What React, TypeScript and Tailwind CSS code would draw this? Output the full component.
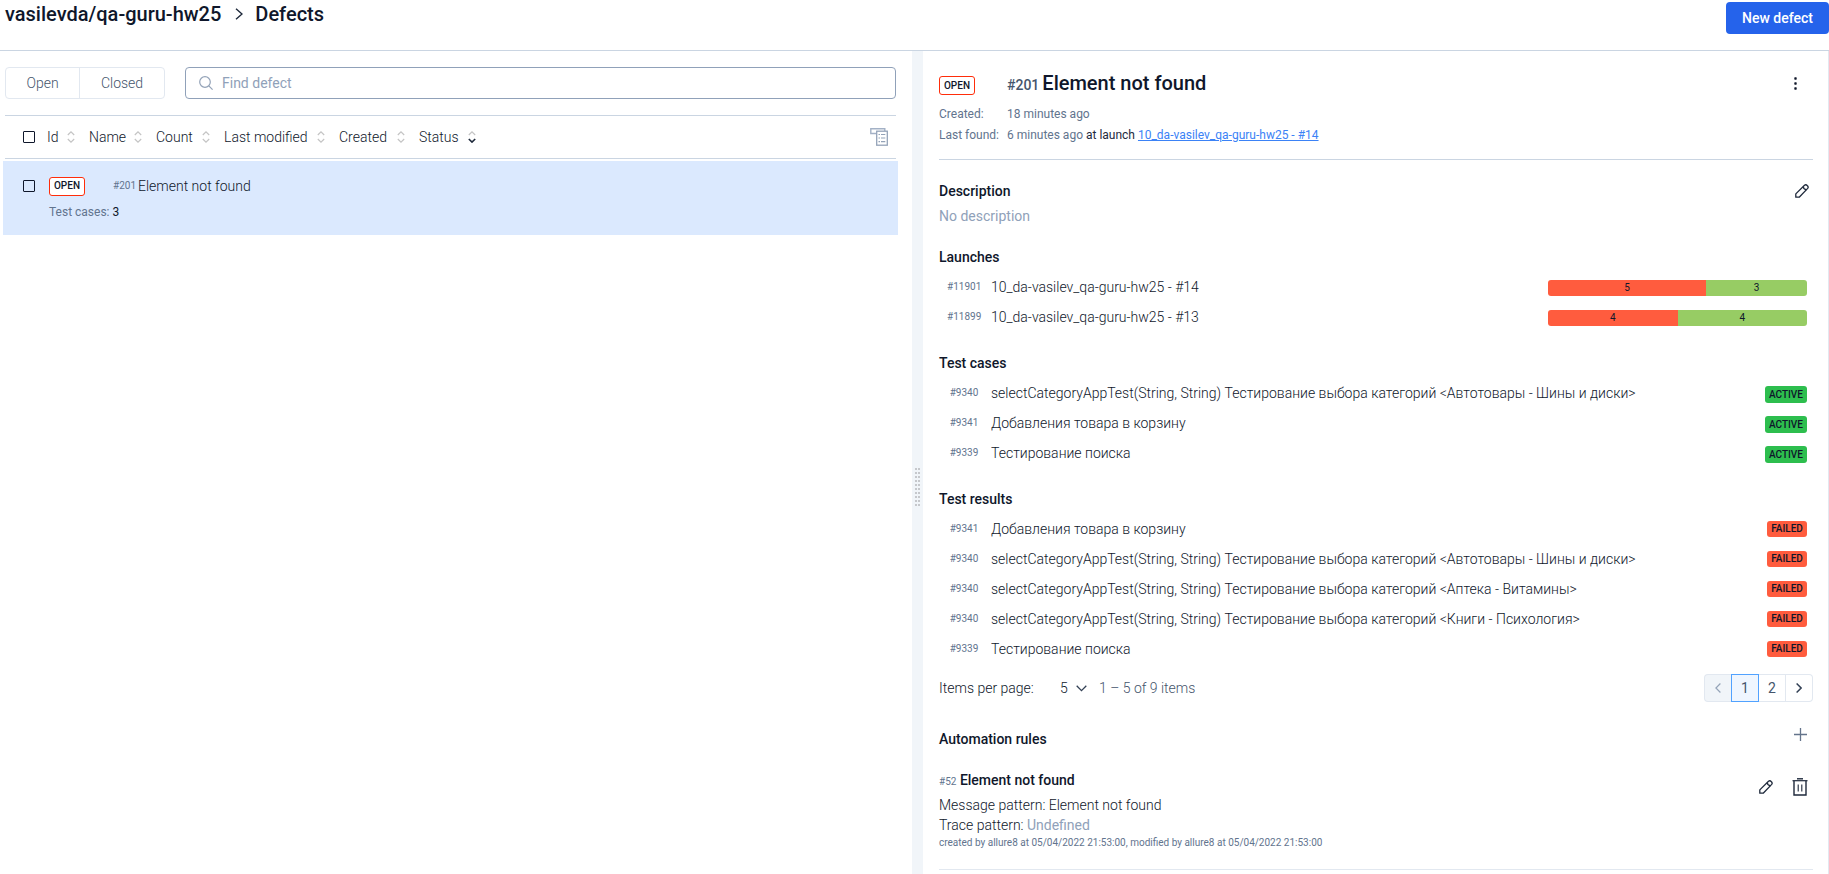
import type { ReactNode } from 'react';

const longName = 'selectCategoryAppTest(String, String) Тестирование выбора категорий';

const launches = [
  { id: 11901, name: '10_da-vasilev_qa-guru-hw25 - #14', failed: 5, passed: 3 },
  { id: 11899, name: '10_da-vasilev_qa-guru-hw25 - #13', failed: 4, passed: 4 },
];

const testCases = [
  { id: 9340, name: `${longName} <Автотовары - Шины и диски>` },
  { id: 9341, name: 'Добавления товара в корзину' },
  { id: 9339, name: 'Тестирование поиска' },
];

const testResults = [
  { id: 9341, name: 'Добавления товара в корзину' },
  { id: 9340, name: `${longName} <Автотовары - Шины и диски>` },
  { id: 9340, name: `${longName} <Аптека - Витамины>` },
  { id: 9340, name: `${longName} <Книги - Психология>` },
  { id: 9339, name: 'Тестирование поиска' },
];

const sortColumns = [
  { label: 'Id', width: 'min-w-7' },
  { label: 'Name', width: 'min-w-[53px]' },
  { label: 'Count', width: 'min-w-[54px]' },
  { label: 'Last modified', width: 'min-w-[101px]' },
  { label: 'Created', width: 'min-w-[66px]' },
  { label: 'Status', width: 'min-w-[57px]', active: true },
];

function SortIcon({ active }: { active?: boolean }) {
  return (
    <svg width="8" height="12" viewBox="0 0 8 12" fill="none" strokeWidth="1.2" aria-hidden="true">
      <path d="M0.8 4 4 0.9 7.2 4" stroke="#c4c4c4" />
      <path d="M0.8 8 4 11.1 7.2 8" stroke={active ? '#1e293b' : '#c4c4c4'} strokeWidth={active ? 1.6 : 1.2} />
    </svg>
  );
}

function PencilIcon() {
  return (
    <svg width="14" height="14" viewBox="0 0 14 14" fill="none" stroke="#1e293b" strokeWidth="1.3" strokeLinejoin="round" aria-hidden="true">
      <path d="M0.8 13.2V9.9L9.5 1.3Q10.9 0.2 12.2 1.5Q13.8 3 12.7 4.4L4.2 13.2Z" />
      <path d="M8 2.9Q8.6 5.4 11.2 6" />
      <path d="M8.1 2.8 11.3 5.9" strokeWidth="0.6" />
    </svg>
  );
}

function TrashIcon() {
  return (
    <svg width="16" height="18" viewBox="0 0 16 18" fill="none" stroke="#1e293b" aria-hidden="true">
      <path d="M5 0.8H11" strokeWidth="1.4" />
      <path d="M0.5 2.7H15.5" strokeWidth="1.2" />
      <path d="M2 3V17H14V3" strokeWidth="1.4" />
      <path d="M6.2 6.5V13.5M9.8 6.5V13.5" strokeWidth="1.1" />
    </svg>
  );
}

function OpenBadge() {
  return (
    <span className="inline-flex h-[19px] w-9 items-center justify-center rounded-[3px] border border-[#ff2d0a] bg-white text-[10px] leading-4 font-medium text-slate-900">
      OPEN
    </span>
  );
}

function Section({ title, children }: { title: string; children: ReactNode }) {
  return (
    <section className="mt-4">
      <h2 className="text-sm leading-[30px] font-medium">{title}</h2>
      <ul>{children}</ul>
    </section>
  );
}

function Row({ id, name, children }: { id: number; name: string; children: ReactNode }) {
  return (
    <li className="flex h-[30px] items-center pr-1.5">
      <span className="ml-2 w-[34px] text-center text-[10px] leading-4 font-normal text-slate-500">#{id}</span>
      <span className="ml-2.5 min-w-0 flex-1 truncate text-sm text-slate-900">{name}</span>
      {children}
    </li>
  );
}

export default function App() {
  return (
    <div className="flex min-h-screen flex-col bg-white font-['Roboto',sans-serif] text-sm font-light text-slate-900">
      <header className="flex h-[51px] justify-between border-b border-slate-300">
        <nav aria-label="Breadcrumb" className="flex h-7 items-center pl-[5px] text-[20px] leading-7 font-medium">
          <a href="#project">vasilevda/qa-guru-hw25</a>
          <svg className="mr-3 ml-3.5" width="8" height="12" viewBox="0 0 8 12" fill="none" stroke="#1e293b" strokeWidth="1.4" aria-hidden="true">
            <path d="M1 0.7 7 6 1 11.3" />
          </svg>
          <h1>Defects</h1>
        </nav>
        <button type="button" className="mt-0.5 h-8 rounded bg-[#2563eb] px-4 font-medium text-white">
          New defect
        </button>
      </header>

      <div className="grid flex-1 grid-cols-[912fr_11px_906fr]">
        <main className="min-w-0 pt-4">
          <div className="flex pr-4 pl-[5px]">
            <div className="flex h-8 rounded border border-slate-200 text-slate-600">
              <button type="button" className="w-[74px] border-r border-slate-200">Open</button>
              <button type="button" className="w-[84px]">Closed</button>
            </div>
            <label className="ml-5 flex h-8 min-w-0 flex-1 items-center rounded border border-slate-400 pl-[13px]">
              <svg width="14" height="14" viewBox="0 0 14 14" fill="none" stroke="#94a3b8" strokeWidth="1.2" aria-hidden="true">
                <circle cx="6" cy="6" r="5.3" />
                <path d="M9.8 9.8 13.6 13.6" />
              </svg>
              <input type="text" aria-label="Find defect" placeholder="Find defect" className="ml-[9px] min-w-0 flex-1 font-normal outline-none placeholder:text-slate-400" />
            </label>
          </div>

          <div className="mt-4 mr-4 ml-[5px] flex h-11 items-center border-y border-slate-300 pr-2 pl-[18px]">
            <input type="checkbox" aria-label="Select all defects" className="size-3 appearance-none rounded-[1px] border border-slate-900" />
            <div className="ml-3 flex flex-1 gap-[14px]">
              {sortColumns.map((column) => (
                <button key={column.label} type="button" className={`flex items-center justify-between text-slate-900 ${column.width}`}>
                  {column.label}
                  <SortIcon active={column.active} />
                </button>
              ))}
            </div>
            <button type="button" aria-label="Group defects">
              <svg width="18" height="18" viewBox="0 0 18 18" fill="none" stroke="#94a3b8" aria-hidden="true">
                <path d="M6 5.5H0.8V0.8H14.8V3" stroke="#a3b1c6" strokeWidth="1.4" />
                <rect x="6.7" y="3.2" width="10.6" height="14" strokeWidth="1.3" />
                <path d="M8.5 6.5H10M11 6.5H15.3M8.5 10H10M11 10H15.3M8.5 13.7H10M11 13.7H15.3" strokeWidth="1.2" />
              </svg>
            </button>
          </div>

          <article className="mt-0.5 mr-3.5 ml-[3px] flex h-[74px] bg-[#dbe9fe] pl-5">
            <input type="checkbox" aria-label="Select defect 201" className="mt-[19px] size-3 appearance-none rounded-[1px] border border-slate-900" />
            <div className="ml-3.5 flex-1 pt-3.5">
              <div className="flex items-center">
                <OpenBadge />
                <span className="ml-7 w-[25px] text-[10px] leading-[22px] font-normal text-slate-500">#201</span>
                <span className="leading-[22px] text-slate-900">Element not found</span>
              </div>
              <p className="mt-1.5 text-xs leading-[18px] font-normal text-slate-500">
                Test cases: <span className="text-slate-900">3</span>
              </p>
            </div>
          </article>
        </main>

        <div role="separator" aria-orientation="vertical" className="flex items-center justify-center bg-slate-100 pt-12">
          <div className="grid grid-cols-2 gap-x-px gap-y-0.5">
            {Array.from({ length: 20 }, (_, i) => (
              <span key={i} className="size-0.5 bg-[#c6c8cc]" />
            ))}
          </div>
        </div>

        <aside className="min-w-0 border-r border-slate-200 pr-[15px] pl-4">
          <div className="grid grid-cols-[68px_1fr_auto] items-center border-b border-slate-300 pt-5 pb-[13px] text-xs font-normal text-slate-500">
            <span className="flex self-end"><OpenBadge /></span>
            <div className="flex items-baseline leading-6 font-medium">
              <span className="mr-[3px] text-sm text-slate-600">#201</span>
              <h2 className="text-xl leading-6 text-slate-900">Element not found</h2>
            </div>
            <button type="button" aria-label="More actions" className="mr-4">
              <svg width="3" height="13" viewBox="0 0 3 13" fill="#0f172a" aria-hidden="true">
                <rect x="0.3" y="0.3" width="2.4" height="2.4" rx="0.6" />
                <rect x="0.3" y="5.3" width="2.4" height="2.4" rx="0.6" />
                <rect x="0.3" y="10.3" width="2.4" height="2.4" rx="0.6" />
              </svg>
            </button>
            <span className="mt-[9px] leading-[21px]">Created:</span>
            <span className="col-span-2 mt-[9px] leading-[21px]">18 minutes ago</span>
            <span className="leading-[21px]">Last found:</span>
            <span className="col-span-2 leading-[21px]">
              6 minutes ago <span className="text-slate-800">at launch</span>{' '}
              <a href="#launch-14" className="text-[#3b82f6] underline">10_da-vasilev_qa-guru-hw25 - #14</a>
            </span>
          </div>

          <section className="mt-4">
            <div className="flex items-center justify-between pr-1">
              <h2 className="leading-[30px] font-medium">Description</h2>
              <button type="button" aria-label="Edit description"><PencilIcon /></button>
            </div>
            <p className="leading-5 font-normal text-slate-400">No description</p>
          </section>

          <Section title="Launches">
            {launches.map((launch) => (
              <Row key={launch.id} id={launch.id} name={launch.name}>
                <div className="mt-0.5 flex h-4 w-[259px] overflow-hidden rounded-[3px] text-center text-[10px] leading-4 font-normal text-slate-900">
                  <span className="bg-[#ff5c3e] px-[5px]" style={{ flexGrow: launch.failed }}>{launch.failed}</span>
                  <span className="bg-[#97cc64] px-[5px]" style={{ flexGrow: launch.passed }}>{launch.passed}</span>
                </div>
              </Row>
            ))}
          </Section>

          <Section title="Test cases">
            {testCases.map((item) => (
              <Row key={item.id} id={item.id} name={item.name}>
                <span className="mt-0.5 w-[42px] rounded-[3px] bg-[#2dbe4e] text-center text-[10px] leading-[17px] font-medium">ACTIVE</span>
              </Row>
            ))}
          </Section>

          <Section title="Test results">
            {testResults.map((item, index) => (
              <Row key={index} id={item.id} name={item.name}>
                <span className="w-10 rounded-[3px] bg-[#ff5c3e] text-center text-[10px] leading-4 font-medium">FAILED</span>
              </Row>
            ))}
          </Section>

          <div className="mt-2.5 flex h-7 items-center text-slate-600">
            <label htmlFor="page-size" className="w-[121px] text-slate-900">Items per page:</label>
            <span className="grid w-[39px] items-center">
              <select id="page-size" defaultValue="5" className="col-start-1 row-start-1 appearance-none bg-transparent text-slate-900 outline-none">
                <option>5</option>
                <option>10</option>
              </select>
              <svg className="pointer-events-none col-start-1 row-start-1 mr-3 justify-self-end" width="11" height="7" viewBox="0 0 11 7" fill="none" stroke="#334155" strokeWidth="1.3" aria-hidden="true">
                <path d="M0.7 0.8 5.5 5.6 10.3 0.8" />
              </svg>
            </span>
            <span>1 – 5 of 9 items</span>
            <nav aria-label="Pagination" className="ml-auto flex h-7 font-normal">
              <button type="button" aria-label="Previous page" disabled className="flex w-[27px] items-center justify-center rounded-l border border-r-0 border-slate-200 bg-slate-100">
                <svg width="6" height="10" viewBox="0 0 6 10" fill="none" stroke="#94a3b8" strokeWidth="1.2" aria-hidden="true"><path d="M5.4 0.5 0.9 5 5.4 9.5" /></svg>
              </button>
              <button type="button" aria-current="page" className="w-7 border border-blue-400 bg-blue-50">1</button>
              <button type="button" className="w-[27px] border-y border-r border-slate-200">2</button>
              <button type="button" aria-label="Next page" className="flex w-[27px] items-center justify-center rounded-r border border-l-0 border-slate-200">
                <svg width="6" height="10" viewBox="0 0 6 10" fill="none" stroke="#334155" strokeWidth="1.5" aria-hidden="true"><path d="M0.6 0.5 5.1 5 0.6 9.5" /></svg>
              </button>
            </nav>
          </div>

          <section className="mt-[22px]">
            <div className="flex justify-between pr-1.5">
              <h2 className="leading-[30px] font-medium">Automation rules</h2>
              <button type="button" aria-label="Add automation rule" className="h-5">
                <svg width="13" height="13" viewBox="0 0 13 13" stroke="#64748b" strokeWidth="1.3" aria-hidden="true"><path d="M6.5 0V13M0 6.5H13" /></svg>
              </button>
            </div>
            <article className="mt-4 flex justify-between border-b border-slate-200 pr-[5px] pb-[18px] text-slate-900">
              <div>
                <h3 className="leading-5 font-medium text-slate-900">
                  <span className="text-[10px] leading-4 font-normal text-slate-500">#52</span> Element not found
                </h3>
                <p className="mt-[5px] leading-5">Message pattern: Element not found</p>
                <p className="leading-5">Trace pattern: <span className="font-normal text-slate-400">Undefined</span></p>
                <p className="text-[10px] leading-4 font-normal text-slate-500">created by allure8 at 05/04/2022 21:53:00, modified by allure8 at 05/04/2022 21:53:00</p>
              </div>
              <div className="mt-2 flex h-[18px] items-center gap-[19px]">
                <button type="button" aria-label="Edit rule"><PencilIcon /></button>
                <button type="button" aria-label="Delete rule"><TrashIcon /></button>
              </div>
            </article>
          </section>
        </aside>
      </div>
    </div>
  );
}
